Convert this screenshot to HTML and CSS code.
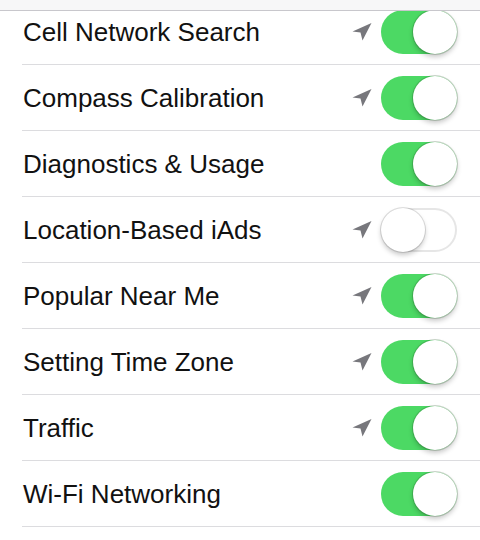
FILE: index.html
```html
<!DOCTYPE html>
<html lang="en">
<head>
    <meta charset="UTF-8">
    <meta name="viewport" content="width=device-width, initial-scale=1.0">
    <title>Privacy - System Services</title>
    <link rel="stylesheet" href="styles.css">
</head>
<body>
    <div class="top-bar"></div>

    <ul class="settings">
        <li class="row"><div class="row-body"><span class="label">Cell Network Search</span>
            <svg class="loc" viewBox="0 0 20 20"><path d="M19.5 1 L0.5 9.5 L8.5 10.5 L10.5 18.5 Z"/></svg>
            <span class="switch on"></span></div></li>
        <li class="row"><div class="row-body"><span class="label">Compass Calibration</span>
            <svg class="loc" viewBox="0 0 20 20"><path d="M19.5 1 L0.5 9.5 L8.5 10.5 L10.5 18.5 Z"/></svg>
            <span class="switch on"></span></div></li>
        <li class="row"><div class="row-body"><span class="label">Diagnostics &amp; Usage</span>
            <span class="switch on"></span></div></li>
        <li class="row"><div class="row-body"><span class="label">Location-Based iAds</span>
            <svg class="loc" viewBox="0 0 20 20"><path d="M19.5 1 L0.5 9.5 L8.5 10.5 L10.5 18.5 Z"/></svg>
            <span class="switch"></span></div></li>
        <li class="row"><div class="row-body"><span class="label">Popular Near Me</span>
            <svg class="loc" viewBox="0 0 20 20"><path d="M19.5 1 L0.5 9.5 L8.5 10.5 L10.5 18.5 Z"/></svg>
            <span class="switch on"></span></div></li>
        <li class="row"><div class="row-body"><span class="label">Setting Time Zone</span>
            <svg class="loc" viewBox="0 0 20 20"><path d="M19.5 1 L0.5 9.5 L8.5 10.5 L10.5 18.5 Z"/></svg>
            <span class="switch on"></span></div></li>
        <li class="row"><div class="row-body"><span class="label">Traffic</span>
            <svg class="loc" viewBox="0 0 20 20"><path d="M19.5 1 L0.5 9.5 L8.5 10.5 L10.5 18.5 Z"/></svg>
            <span class="switch on"></span></div></li>
        <li class="row"><div class="row-body"><span class="label">Wi-Fi Networking</span>
            <span class="switch on"></span></div></li>
    </ul>
</body>
</html>
```

FILE: styles.css
```css
body {
    margin: 0;
    background: #fff;
    font-family: "Liberation Sans", Arial, sans-serif;
    color: #111;
}

/* grey bar that covers the top of the first row */
.top-bar {
    position: fixed;
    top: 0;
    left: 0;
    right: 0;
    height: 10px;
    background: #f7f7f8;
    border-bottom: 1px solid #c8c7cc;
    z-index: 2;
}

.settings {
    list-style: none;
    margin: -1px 0 0;
    padding: 0;
}

.row {
    padding-left: 22px;
}

.row-body {
    display: flex;
    align-items: center;
    height: 65px;
    padding-right: 23px;
    border-bottom: 1px solid #dcdcdf;
}

.label {
    flex: 1;
    font-size: 26px;
    padding: 2px 0 0 1px;
}

.loc {
    width: 20px;
    height: 20px;
    margin-right: 9px;
    fill: #77777c;
}

.switch {
    position: relative;
    width: 76px;
    height: 44px;
    border-radius: 22px;
    background: #fff;
    box-shadow: inset 0 0 0 2px #e6e6e6;
}

.switch::after {
    content: "";
    position: absolute;
    top: 0;
    left: 0;
    width: 44px;
    height: 44px;
    border-radius: 50%;
    background: #fff;
    box-shadow: 0 0 0 1px rgba(0, 0, 0, 0.12), 0 3px 5px rgba(0, 0, 0, 0.22);
}

.switch.on {
    background: #4cd964;
    box-shadow: none;
}

.switch.on::after {
    left: 32px;
    box-shadow: 0 0 0 1px rgba(40, 90, 40, 0.25), 0 3px 5px rgba(0, 0, 0, 0.22);
}
```
